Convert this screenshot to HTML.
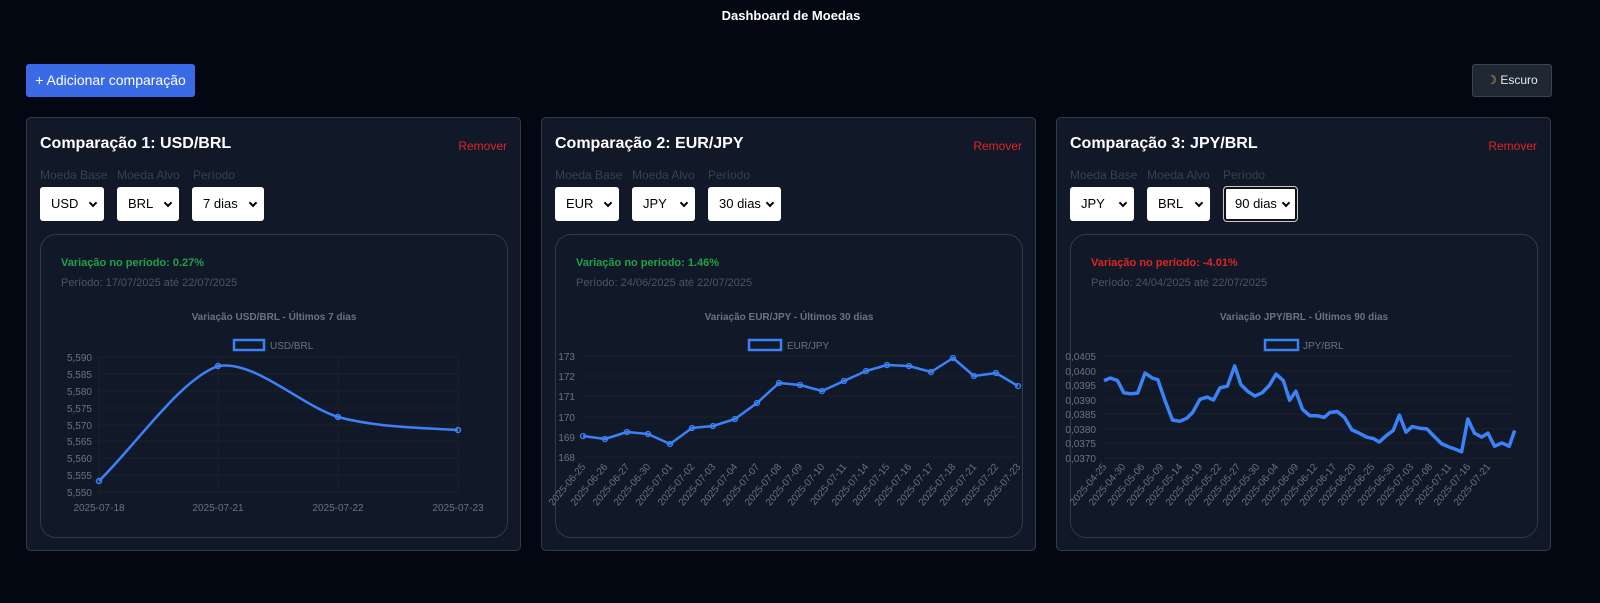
<!DOCTYPE html>
<html><head><meta charset="utf-8">
<style>
*{box-sizing:border-box;margin:0;padding:0}
body{width:1600px;height:603px;background:#030712;font-family:"Liberation Sans",sans-serif;position:relative;overflow:hidden;color:#fff}
.t{position:absolute;top:8px;left:0;width:1582px;text-align:center;font-size:13px;font-weight:bold}
.add{position:absolute;left:26px;top:64px;width:169px;height:33px;background:#3b6ae6;border-radius:3px;font-size:14px;line-height:33px;text-align:center;color:#fff}
.dark{position:absolute;left:1472px;top:64px;width:80px;height:33px;background:#1f2733;border:1px solid #3b4452;border-radius:3px;font-size:12px;line-height:31px;text-align:center;color:#e5e7eb}
.card{position:absolute;top:117px;width:495px;height:434px;background:#111827;border:1px solid #323b4a;border-radius:5px}
.card h2{position:absolute;left:13px;top:17px;font-size:16px;font-weight:bold;color:#fff}
.rm{position:absolute;right:13px;top:21px;font-size:12px;color:#dc2626}
.lb{position:absolute;top:50px;font-size:12px;color:#374151}
.sel{position:absolute;top:69px;height:34px;background:#fff;border-radius:3px;color:#000;font-size:13px;line-height:34px;padding-left:11px}
.sel:after{content:"";position:absolute;right:8px;top:13px;width:4px;height:4px;border-right:2px solid #000;border-bottom:2px solid #000;transform:rotate(45deg)}
.sel.f{border:2px solid #111;outline:1px solid #ccc;line-height:30px;padding-left:9px}
.sel.f:after{top:11px;right:6px}
.in{position:absolute;left:13px;top:116px;width:468px;height:304px;border:1px solid #313a48;border-radius:16px}
.v{position:absolute;left:20px;top:22px;font-size:11px;font-weight:bold;color:#22a04a}
.p{position:absolute;left:20px;top:42px;font-size:11px;color:#4b5563}
svg{position:absolute;left:0;top:0}
svg text{font-family:"Liberation Sans",sans-serif}
</style></head><body>
<div class="t">Dashboard de Moedas</div>
<div class="add">+ Adicionar comparação</div>
<div class="dark"><span style="color:#f5b041">&#9789;</span> Escuro</div>

<div class="card" style="left:26px">
<h2>Comparação 1: USD/BRL</h2><div class="rm">Remover</div>
<div class="lb" style="left:13px">Moeda Base</div><div class="lb" style="left:90px">Moeda Alvo</div><div class="lb" style="left:166px">Período</div>
<div class="sel" style="left:13px;width:64px">USD</div><div class="sel" style="left:90px;width:62px">BRL</div><div class="sel" style="left:165px;width:72px">7 dias</div>
<div class="in"><div class="v">Variação no período: 0.27%</div><div class="p">Período: 17/07/2025 até 22/07/2025</div></div>
</div>
<div class="card" style="left:541px">
<h2>Comparação 2: EUR/JPY</h2><div class="rm">Remover</div>
<div class="lb" style="left:13px">Moeda Base</div><div class="lb" style="left:90px">Moeda Alvo</div><div class="lb" style="left:166px">Período</div>
<div class="sel" style="left:13px;width:64px">EUR</div><div class="sel" style="left:90px;width:63px">JPY</div><div class="sel" style="left:166px;width:73px">30 dias</div>
<div class="in"><div class="v">Variação no período: 1.46%</div><div class="p">Período: 24/06/2025 até 22/07/2025</div></div>
</div>
<div class="card" style="left:1056px">
<h2>Comparação 3: JPY/BRL</h2><div class="rm">Remover</div>
<div class="lb" style="left:13px">Moeda Base</div><div class="lb" style="left:90px">Moeda Alvo</div><div class="lb" style="left:166px">Período</div>
<div class="sel" style="left:13px;width:64px">JPY</div><div class="sel" style="left:90px;width:63px">BRL</div><div class="sel f" style="left:167px;width:73px">90 dias</div>
<div class="in"><div class="v" style="color:#dc2626">Variação no período: -4.01%</div><div class="p">Período: 24/04/2025 até 22/07/2025</div></div>
</div>

<svg width="1600" height="603" viewBox="0 0 1600 603">
<g font-size="10" fill="#6b7280">
<text x="274" y="320" text-anchor="middle" font-weight="bold">Variação USD/BRL - Últimos 7 dias</text>
<rect x="234" y="340" width="30" height="10" fill="none" stroke="#3b82f6" stroke-width="2.5"/>
<text x="270" y="349">USD/BRL</text>
<g stroke="#1a202c" stroke-width="1">
<line x1="99" y1="357" x2="458" y2="357"/><line x1="99" y1="374" x2="458" y2="374"/><line x1="99" y1="391" x2="458" y2="391"/><line x1="99" y1="408" x2="458" y2="408"/><line x1="99" y1="425" x2="458" y2="425"/><line x1="99" y1="441" x2="458" y2="441"/><line x1="99" y1="458" x2="458" y2="458"/><line x1="99" y1="475" x2="458" y2="475"/><line x1="99" y1="492" x2="458" y2="492"/>
<line x1="99" y1="357" x2="99" y2="492"/><line x1="218" y1="357" x2="218" y2="492"/><line x1="338" y1="357" x2="338" y2="492"/><line x1="458" y1="357" x2="458" y2="492"/>
</g>
<g text-anchor="end"><text x="92" y="361">5,590</text><text x="92" y="378">5,585</text><text x="92" y="395">5,580</text><text x="92" y="412">5,575</text><text x="92" y="429">5,570</text><text x="92" y="445">5,565</text><text x="92" y="462">5,560</text><text x="92" y="479">5,555</text><text x="92" y="496">5,550</text></g>
<g text-anchor="middle"><text x="99" y="511">2025-07-18</text><text x="218" y="511">2025-07-21</text><text x="338" y="511">2025-07-22</text><text x="458" y="511">2025-07-23</text></g>
<path d="M99 481 C140 440,180 380,218 366 C255 360,300 405,338 417 C375 427,420 428,458 430" fill="none" stroke="#3b82f6" stroke-width="2.5"/>
<g fill="none" stroke="#3b82f6" stroke-width="1.5"><circle cx="99" cy="481" r="2.5"/><circle cx="218" cy="366" r="2.5"/><circle cx="338" cy="417" r="2.5"/><circle cx="458" cy="430" r="2.5"/></g>

<text x="789" y="320" text-anchor="middle" font-weight="bold">Variação EUR/JPY - Últimos 30 dias</text>
<rect x="749" y="340" width="32" height="10" fill="none" stroke="#3b82f6" stroke-width="2.5"/>
<text x="787" y="349">EUR/JPY</text>
<g stroke="#1a202c"><line x1="583" y1="356" x2="1018" y2="356"/><line x1="583" y1="376" x2="1018" y2="376"/><line x1="583" y1="396" x2="1018" y2="396"/><line x1="583" y1="417" x2="1018" y2="417"/><line x1="583" y1="437" x2="1018" y2="437"/><line x1="583" y1="457" x2="1018" y2="457"/></g>
<g text-anchor="end"><text x="575" y="360">173</text><text x="575" y="380">172</text><text x="575" y="400">171</text><text x="575" y="421">170</text><text x="575" y="441">169</text><text x="575" y="461">168</text></g>
<polyline fill="none" stroke="#3b82f6" stroke-width="2.5" stroke-linejoin="round" points="583,436 605,439 627,432 648,434 670,444 692,428 713,426 735,419 757,403 779,383 800,385 822,391 844,381 866,371 887,365 909,366 931,372 953,358 974,376 996,373 1018,386"/>
<g fill="none" stroke="#3b82f6" stroke-width="1.3"><circle cx="583" cy="436" r="2.5"/><circle cx="605" cy="439" r="2.5"/><circle cx="627" cy="432" r="2.5"/><circle cx="648" cy="434" r="2.5"/><circle cx="670" cy="444" r="2.5"/><circle cx="692" cy="428" r="2.5"/><circle cx="713" cy="426" r="2.5"/><circle cx="735" cy="419" r="2.5"/><circle cx="757" cy="403" r="2.5"/><circle cx="779" cy="383" r="2.5"/><circle cx="800" cy="385" r="2.5"/><circle cx="822" cy="391" r="2.5"/><circle cx="844" cy="381" r="2.5"/><circle cx="866" cy="371" r="2.5"/><circle cx="887" cy="365" r="2.5"/><circle cx="909" cy="366" r="2.5"/><circle cx="931" cy="372" r="2.5"/><circle cx="953" cy="358" r="2.5"/><circle cx="974" cy="376" r="2.5"/><circle cx="996" cy="373" r="2.5"/><circle cx="1018" cy="386" r="2.5"/></g>
<g text-anchor="end">
<text transform="translate(586,467) rotate(-50)">2025-06-25</text><text transform="translate(608,467) rotate(-50)">2025-06-26</text><text transform="translate(630,467) rotate(-50)">2025-06-27</text><text transform="translate(651,467) rotate(-50)">2025-06-30</text><text transform="translate(673,467) rotate(-50)">2025-07-01</text><text transform="translate(695,467) rotate(-50)">2025-07-02</text><text transform="translate(716,467) rotate(-50)">2025-07-03</text><text transform="translate(738,467) rotate(-50)">2025-07-04</text><text transform="translate(760,467) rotate(-50)">2025-07-07</text><text transform="translate(782,467) rotate(-50)">2025-07-08</text><text transform="translate(803,467) rotate(-50)">2025-07-09</text><text transform="translate(825,467) rotate(-50)">2025-07-10</text><text transform="translate(847,467) rotate(-50)">2025-07-11</text><text transform="translate(869,467) rotate(-50)">2025-07-14</text><text transform="translate(890,467) rotate(-50)">2025-07-15</text><text transform="translate(912,467) rotate(-50)">2025-07-16</text><text transform="translate(934,467) rotate(-50)">2025-07-17</text><text transform="translate(956,467) rotate(-50)">2025-07-18</text><text transform="translate(977,467) rotate(-50)">2025-07-21</text><text transform="translate(999,467) rotate(-50)">2025-07-22</text><text transform="translate(1021,467) rotate(-50)">2025-07-23</text>
</g>

<text x="1304" y="320" text-anchor="middle" font-weight="bold">Variação JPY/BRL - Últimos 90 dias</text>
<rect x="1265" y="340" width="33" height="10" fill="none" stroke="#3b82f6" stroke-width="2.5"/>
<text x="1303" y="349">JPY/BRL</text>
<g stroke="#1a202c"><line x1="1104" y1="356" x2="1515" y2="356"/><line x1="1104" y1="371" x2="1515" y2="371"/><line x1="1104" y1="385" x2="1515" y2="385"/><line x1="1104" y1="400" x2="1515" y2="400"/><line x1="1104" y1="414" x2="1515" y2="414"/><line x1="1104" y1="429" x2="1515" y2="429"/><line x1="1104" y1="443" x2="1515" y2="443"/><line x1="1104" y1="458" x2="1515" y2="458"/></g>
<g text-anchor="end"><text x="1096" y="360">0,0405</text><text x="1096" y="375">0,0400</text><text x="1096" y="389">0,0395</text><text x="1096" y="404">0,0390</text><text x="1096" y="418">0,0385</text><text x="1096" y="433">0,0380</text><text x="1096" y="447">0,0375</text><text x="1096" y="462">0,0370</text></g>
<polyline transform="translate(1009.6,332.1) scale(0.366,0.328)" vector-effect="non-scaling-stroke" fill="none" stroke="#3b82f6" stroke-width="3.5" stroke-linejoin="round" points="258,148 275,140 295,148 312,185 330,188 350,186 370,125 390,140 405,145 425,210 445,268 465,272 485,262 500,245 520,205 540,198 557,207 575,170 595,165 615,103 632,160 650,180 670,195 690,185 710,162 728,128 748,148 765,208 782,180 800,235 820,255 840,255 860,260 875,245 895,242 915,260 935,298 955,308 975,320 995,325 1010,335 1030,315 1048,300 1065,253 1083,305 1100,288 1120,293 1140,295 1160,318 1180,340 1200,350 1220,358 1235,365 1252,265 1270,308 1290,320 1307,308 1325,348 1345,338 1365,348 1380,300"/>
<g text-anchor="end">
<text transform="translate(1107,467) rotate(-50)">2025-04-25</text><text transform="translate(1126,467) rotate(-50)">2025-04-30</text><text transform="translate(1145,467) rotate(-50)">2025-05-06</text><text transform="translate(1164,467) rotate(-50)">2025-05-09</text><text transform="translate(1183,467) rotate(-50)">2025-05-14</text><text transform="translate(1203,467) rotate(-50)">2025-05-19</text><text transform="translate(1222,467) rotate(-50)">2025-05-22</text><text transform="translate(1241,467) rotate(-50)">2025-05-27</text><text transform="translate(1260,467) rotate(-50)">2025-05-30</text><text transform="translate(1279,467) rotate(-50)">2025-06-04</text><text transform="translate(1299,467) rotate(-50)">2025-06-09</text><text transform="translate(1318,467) rotate(-50)">2025-06-12</text><text transform="translate(1337,467) rotate(-50)">2025-06-17</text><text transform="translate(1356,467) rotate(-50)">2025-06-20</text><text transform="translate(1375,467) rotate(-50)">2025-06-25</text><text transform="translate(1395,467) rotate(-50)">2025-06-30</text><text transform="translate(1414,467) rotate(-50)">2025-07-03</text><text transform="translate(1433,467) rotate(-50)">2025-07-08</text><text transform="translate(1452,467) rotate(-50)">2025-07-11</text><text transform="translate(1471,467) rotate(-50)">2025-07-16</text><text transform="translate(1491,467) rotate(-50)">2025-07-21</text>
</g>
</g>
</svg>
</body></html>
